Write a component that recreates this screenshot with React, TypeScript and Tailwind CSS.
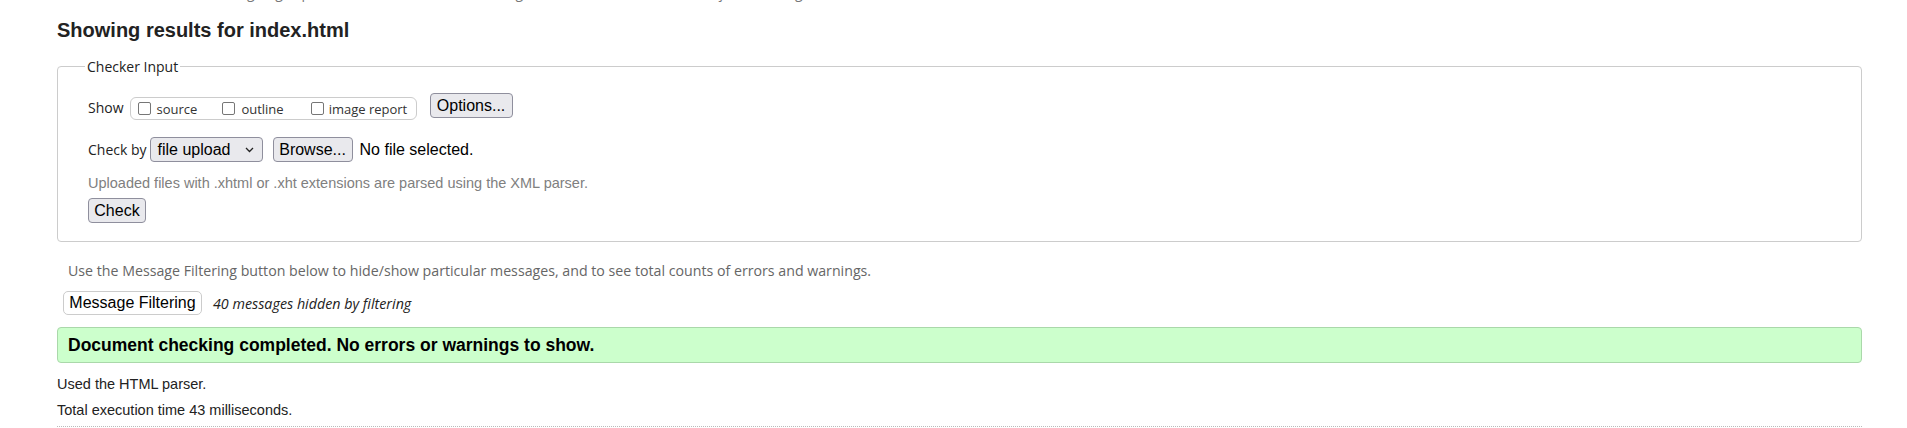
import React from 'react';

const sans = "font-['Liberation_Sans',Arial,sans-serif]";
const ui = "font-['Open_Sans','Noto_Sans',sans-serif]";

const Box = () => (
  <span className="inline-block h-[13px] w-[13px] shrink-0 rounded-[2px] border border-[#767676] bg-white" />
);

const ChevronDown = () => (
  <svg width="9" height="6" viewBox="0 0 9 6" fill="none">
    <path d="M1 1l3.5 3.5L8 1" stroke="#222" strokeWidth="1.3" />
  </svg>
);

const btn =
  "rounded-[4px] border border-[#8f8f9d] bg-[#e9e9ed] py-[2px] text-[16px] leading-[19px] text-black " + sans;

export default function App() {
  return (
    <div className="min-h-[428px] bg-white">
      {/* tail of the intro line that scrolled off the top */}
      <div className="h-[18px] overflow-hidden">
        <p className={`mt-[-17px] pl-[137px] text-[14px] leading-[19px] text-[#777] ${ui}`}>
          This tool is an ongoing experiment in better HTML checking, and its behavior remains subject to change
        </p>
      </div>

      <div className="ml-[57px] w-[1805px]">
        <h2 className={`text-[20px] font-bold leading-[24px] text-[#222] ${sans}`}>
          Showing results for index.html
        </h2>

        <fieldset className="mt-[15px] rounded-[4px] border border-[#cccccc] pb-[18px] pl-[30px] pt-[17px]">
          <legend className={`ml-[-3px] px-[2px] text-[14px] leading-[19px] text-[#222] ${ui}`}>Checker Input</legend>

          <div className="flex items-start">
            <span className={`mt-[5px] text-[14px] leading-[19px] text-[#222] ${ui}`}>Show</span>
            <div className="ml-[6px] mt-[4px] flex h-[23px] w-[287px] items-center rounded-[6px] border border-[#cccccc] pl-[7px]">
              <Box />
              <span className={`ml-[6px] text-[13px] leading-[18px] text-[#333] ${ui}`}>source</span>
              <span className="ml-[25px]"><Box /></span>
              <span className={`ml-[6px] text-[13px] leading-[18px] text-[#333] ${ui}`}>outline</span>
              <span className="ml-[27px]"><Box /></span>
              <span className={`ml-[5px] text-[13px] leading-[18px] text-[#333] ${ui}`}>image report</span>
            </div>
            <button className={`ml-[13px] w-[83px] ${btn}`}>Options...</button>
          </div>

          <div className="mt-[17px] flex items-center">
            <span className={`text-[14px] leading-[19px] text-[#222] ${ui}`}>Check by</span>
            <div className={`ml-[3px] flex h-[25px] w-[113px] items-center justify-between pl-[7px] pr-[8px] ${btn}`}>
              <span>file upload</span>
              <ChevronDown />
            </div>
            <button className={`ml-[10px] w-[80px] ${btn}`}>Browse...</button>
            <span className={`ml-[7px] text-[16px] leading-[19px] text-black ${sans}`}>No file selected.</span>
          </div>

          <p className={`mt-[13px] text-[14.5px] leading-[17px] text-[#808080] ${sans}`}>
            Uploaded files with .xhtml or .xht extensions are parsed using the XML parser.
          </p>

          <button className={`mt-[6px] w-[58px] ${btn}`}>Check</button>
        </fieldset>

        <p className={`mt-[19px] pl-[11px] text-[14.2px] leading-[19px] text-[#666] ${ui}`}>
          Use the Message Filtering button below to hide/show particular messages, and to see total counts of errors and warnings.
        </p>

        <div className="mt-[11px] flex items-center pl-[6px]">
          <button
            className={`h-[24px] w-[139px] rounded-[5px] border border-[#cccccc] bg-white text-[16px] leading-[18px] text-black ${sans}`}
          >
            Message Filtering
          </button>
          <span className={`ml-[11px] text-[14.3px] italic leading-[19px] text-[#222] ${ui}`}>
            40 messages hidden by filtering
          </span>
        </div>

        <div className="mt-[12px] flex h-[36px] items-center rounded-[4px] border border-[#aad8aa] bg-[#ccffcc] pl-[10px]">
          <span className={`text-[17.5px] font-bold leading-[22px] text-black ${sans}`}>
            Document checking completed. No errors or warnings to show.
          </span>
        </div>

        <div className={`mt-[11px] text-[14.5px] text-[#222] ${sans}`}>
          <p className="leading-[20px]">Used the HTML parser.</p>
          <p className="mt-[6px] leading-[20px]">Total execution time 43 milliseconds.</p>
        </div>

        <div className="mt-[6px] border-t border-dotted border-[#bbbbbb]" />
      </div>
    </div>
  );
}
